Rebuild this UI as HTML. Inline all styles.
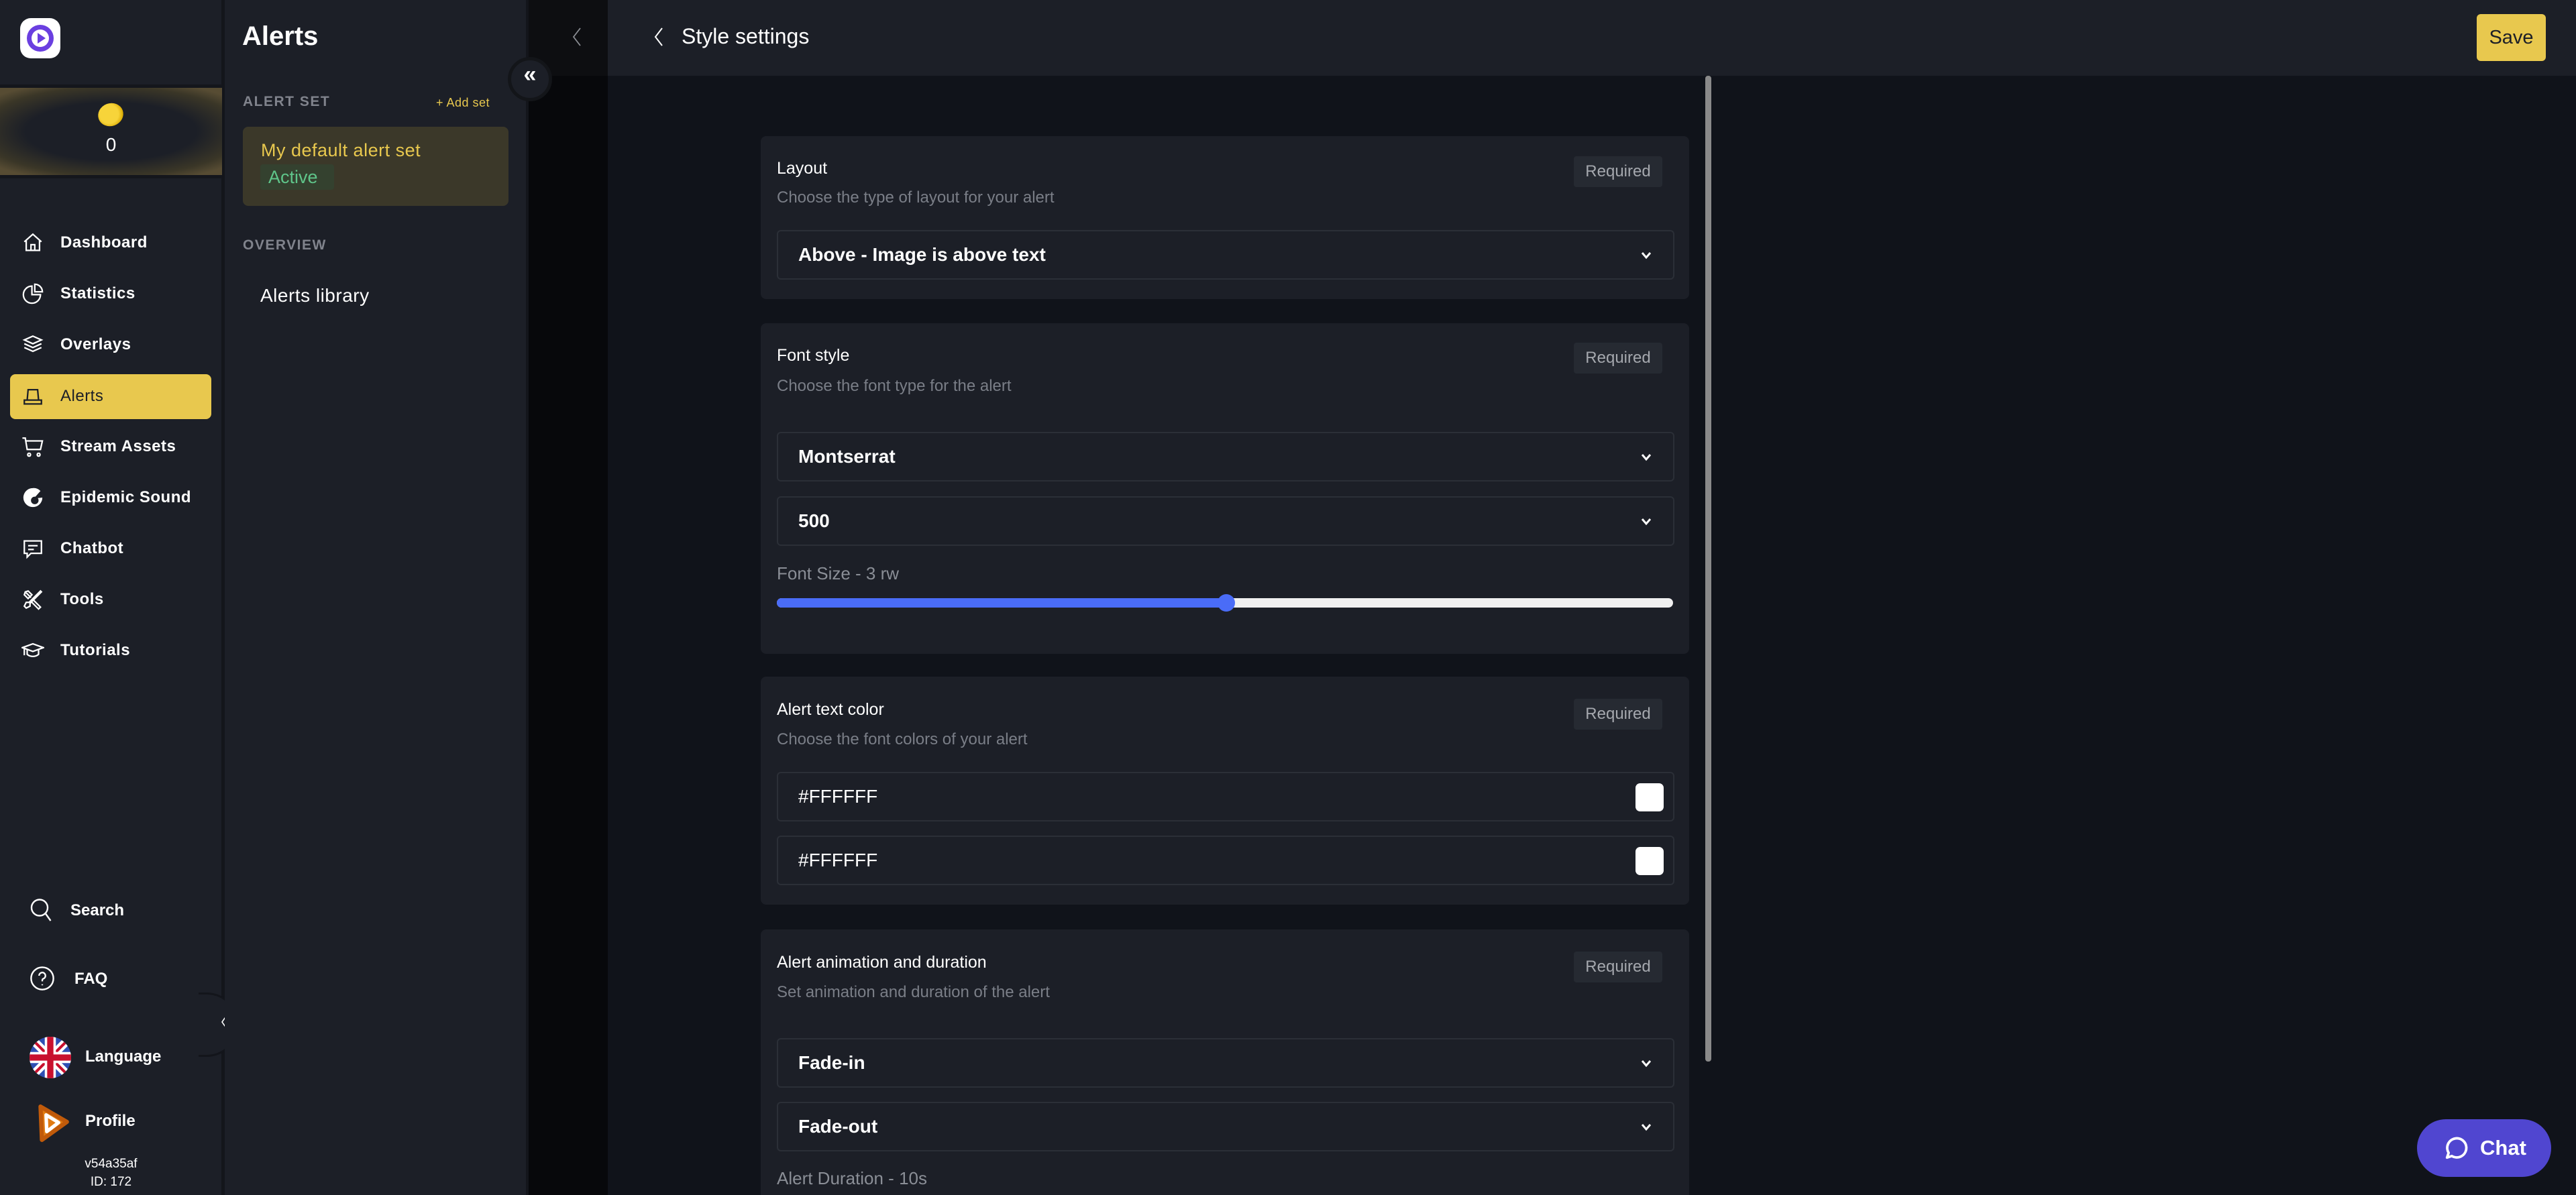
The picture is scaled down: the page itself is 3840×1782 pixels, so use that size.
<!DOCTYPE html>
<html><head><meta charset="utf-8"><style>
*{margin:0;padding:0;box-sizing:border-box}
html{width:3840px;height:1782px;overflow:hidden}
body{width:3840px;height:1782px;overflow:hidden;background:#10131a;font-family:"Liberation Sans",sans-serif;color:#fff;position:relative}
.a{position:absolute}
.nav{position:absolute;left:0;width:331px;height:60px;display:flex;align-items:center;font-size:24px;font-weight:600;letter-spacing:.5px}
.nav svg{position:absolute;left:32px;width:34px;height:34px}
.nav span{position:absolute;left:90px}
.card{position:absolute;left:1134px;width:1384px;background:#1c1f27;border-radius:8px}
.t{position:absolute;left:24px;font-size:25px;color:#fff}
.s{position:absolute;left:24px;font-size:24px;color:#7a7e87}
.req{position:absolute;left:1212px;width:132px;height:46px;background:#262a32;border-radius:4px;color:#a5a8ae;font-size:24px;display:flex;align-items:center;justify-content:center}
.sel{position:absolute;left:24px;width:1338px;height:74px;border:2px solid #2b2f37;border-radius:6px;font-size:28px;font-weight:600;display:flex;align-items:center;padding-left:30px}
.sel .ch{position:absolute;right:30px;top:26px;width:20px;height:20px}
.sw{position:absolute;right:14px;top:15px;width:42px;height:42px;background:#fff;border-radius:7px}
</style></head><body>
<!-- sidebar1 -->
<div class="a" style="left:0;top:0;width:331px;height:1782px;background:#1c1f27"></div>
<div class="a" style="left:330px;top:0;width:5px;height:1782px;background:#13151b"></div>
<div class="a" style="left:30px;top:27px;width:60px;height:60px;background:#fff;border-radius:16px"></div>
<svg class="a" style="left:36px;top:33px" width="48" height="48" viewBox="0 0 48 48"><circle cx="24" cy="24" r="20" fill="#6a3fe0"/><circle cx="24" cy="24" r="13" fill="#fff"/><path d="M20 16 L32 24 L20 32 Z" fill="#6a3fe0"/></svg>
<div class="a" style="left:0;top:126px;width:331px;height:140px;background:#14161c"></div>
<div class="a" style="left:0;top:131px;width:331px;height:130px;background:radial-gradient(ellipse 70% 60% at 50% 50%,#1c1f27 55%,#3a3627 85%,#574c33 100%)"></div>
<div class="a" style="left:146px;top:154px;width:38px;height:34px;border-radius:50%;background:radial-gradient(circle at 45% 45%,#f7d43a 50%,#d9a900 75%,#f2e27a 100%);transform:rotate(-20deg)"></div>
<div class="a" style="left:0;top:200px;width:331px;text-align:center;font-size:28px">0</div>

<div class="nav" style="top:332px"><svg viewBox="0 0 24 24" fill="none" stroke="#fff" stroke-width="1.6"><path d="M3 11 L12 3 L21 11 M5 9.5 V20 H19 V9.5 M10 20 V14 H14 V20"/></svg><span>Dashboard</span></div>
<div class="nav" style="top:408px"><svg viewBox="0 0 24 24" fill="none" stroke="#fff" stroke-width="1.6"><path d="M11 4 A9 9 0 1 0 20 13 H11 Z M14 2 V10 H22 A8 8 0 0 0 14 2 Z"/></svg><span>Statistics</span></div>
<div class="nav" style="top:484px"><svg viewBox="0 0 24 24" fill="none" stroke="#fff" stroke-width="1.6"><path d="M12 3 L21 7 L12 11 L3 7 Z M3 11 L12 15 L21 11 M3 15 L12 19 L21 15"/></svg><span>Overlays</span></div>
<div class="a" style="left:15px;top:558px;width:300px;height:67px;background:#e8c84e;border-radius:8px"></div>
<div class="nav" style="top:561px;color:#1c1f27"><svg viewBox="0 0 24 24" fill="none" stroke="#1c1f27" stroke-width="1.6"><path d="M7 5 H17 L18 16 H6 Z M3 16 H21 V20 H3 Z"/></svg><span style="font-weight:500">Alerts</span></div>
<div class="nav" style="top:636px"><svg viewBox="0 0 24 24" fill="none" stroke="#fff" stroke-width="1.6"><path d="M1 3 H4 L6 15 H20 L22 6 H5 M8 19 a1.5 1.5 0 1 0 .1 0 M18 19 a1.5 1.5 0 1 0 .1 0"/></svg><span>Stream Assets</span></div>
<div class="nav" style="top:712px"><svg viewBox="0 0 24 24"><path d="M12 2 A10 10 0 1 0 22 12 L13 13 L20 5 A10 10 0 0 0 12 2 Z" fill="#fff"/><circle cx="14" cy="15" r="4" fill="#1c1f27"/></svg><span>Epidemic Sound</span></div>
<div class="nav" style="top:788px"><svg viewBox="0 0 24 24" fill="none" stroke="#fff" stroke-width="1.6"><path d="M3 4 H21 V17 H10 L6 21 V17 H3 Z M7 9 H17 M7 13 H13"/></svg><span>Chatbot</span></div>
<div class="nav" style="top:864px"><svg viewBox="0 0 24 24" fill="none" stroke="#fff" stroke-width="1.6"><path d="M4 4 L10 10 M4 4 L3 7 L7 11 L11 7 L7 3 Z M13 13 L20 20 L18 22 L11 15 M20 3 L8 15 L5 15 L3 19 L5 21 L9 19 L9 16 L21 4 Z"/></svg><span>Tools</span></div>
<div class="nav" style="top:940px"><svg viewBox="0 0 24 24" fill="none" stroke="#fff" stroke-width="1.6"><path d="M1 9 L12 5 L23 9 L12 13 Z M6 11 V16 C9 19 15 19 18 16 V11 M3 10 V17"/></svg><span>Tutorials</span></div>

<svg class="a" style="left:44px;top:1338px" width="36" height="40" viewBox="0 0 24 26" fill="none" stroke="#fff" stroke-width="1.6"><circle cx="10" cy="10" r="8"/><path d="M16 16 L21 23"/></svg>
<div class="a" style="left:105px;top:1344px;font-size:24px;font-weight:600">Search</div>
<svg class="a" style="left:44px;top:1440px" width="38" height="38" viewBox="0 0 24 24" fill="none" stroke="#fff" stroke-width="1.5"><circle cx="12" cy="12" r="10.5"/><path d="M9 9.5 a3 3 0 1 1 4 2.8 c-1 .5-1 1-1 2.5 M12 17.5 v1"/></svg>
<div class="a" style="left:111px;top:1446px;font-size:24px;font-weight:600">FAQ</div>
<svg class="a" style="left:44px;top:1545px" width="62" height="64" viewBox="0 0 60 60"><defs><clipPath id="c"><circle cx="30" cy="30" r="30"/></clipPath></defs><g clip-path="url(#c)"><rect width="60" height="60" fill="#2e4fb4"/><path d="M0 0 L60 60 M60 0 L0 60" stroke="#fff" stroke-width="12"/><path d="M0 0 L60 60 M60 0 L0 60" stroke="#c8102e" stroke-width="4"/><path d="M30 0 V60 M0 30 H60" stroke="#fff" stroke-width="16"/><path d="M30 0 V60 M0 30 H60" stroke="#c8102e" stroke-width="9"/></g></svg>
<div class="a" style="left:127px;top:1562px;font-size:24px;font-weight:600">Language</div>
<svg class="a" style="left:52px;top:1646px" width="52" height="58" viewBox="0 0 50 56"><path d="M8 4 L46 26 L10 52 Z" fill="#e07b12" stroke="#c05a0a" stroke-width="6" stroke-linejoin="round"/><path d="M16 16 L34 27 L17 40 Z" fill="none" stroke="#fff" stroke-width="5" stroke-linejoin="round"/></svg>
<div class="a" style="left:127px;top:1658px;font-size:24px;font-weight:600">Profile</div>
<div class="a" style="left:0;top:1725px;width:331px;text-align:center;font-size:19px">v54a35af</div>
<div class="a" style="left:0;top:1752px;width:331px;text-align:center;font-size:19px">ID: 172</div>
<div class="a" style="left:296px;top:1480px;width:60px;height:96px;border-radius:0 48px 48px 0;background:#1c1f27;border:3px solid #13151b;border-left:none"></div>
<svg class="a" style="left:328px;top:1512px" width="12" height="24" viewBox="0 0 12 24" fill="none" stroke="#fff" stroke-width="1.6"><path d="M10 2 L3 12 L10 22"/></svg>

<!-- sidebar2 -->
<div class="a" style="left:335px;top:0;width:449px;height:1782px;background:#1c1f27"></div>
<div class="a" style="left:361px;top:32px;font-size:40px;font-weight:700">Alerts</div>
<div class="a" style="left:362px;top:140px;font-size:21px;color:#80838c;letter-spacing:1.5px;font-weight:600">ALERT SET</div>
<div class="a" style="left:650px;top:143px;font-size:18px;color:#e8c84e;letter-spacing:.5px">+ Add set</div>
<div class="a" style="left:362px;top:189px;width:396px;height:118px;background:#3b3829;border-radius:8px"></div>
<div class="a" style="left:389px;top:209px;font-size:27px;color:#e8c84e;font-weight:500;letter-spacing:.5px">My default alert set</div>
<div class="a" style="left:388px;top:245px;width:110px;height:38px;background:#34412f;border-radius:4px;color:#5fc58a;font-size:27px;padding-left:12px;line-height:38px">Active</div>
<div class="a" style="left:362px;top:354px;font-size:21px;color:#80838c;letter-spacing:1.5px;font-weight:600">OVERVIEW</div>
<div class="a" style="left:388px;top:425px;font-size:28px;letter-spacing:.5px">Alerts library</div>

<!-- strip -->
<div class="a" style="left:784px;top:0;width:122px;height:1782px;background:#07080b"></div>
<div class="a" style="left:784px;top:0;width:122px;height:113px;background:#0d0e11"></div>
<div class="a" style="left:784px;top:0;width:4px;height:1782px;background:#13151b"></div>
<svg class="a" style="left:852px;top:40px" width="16" height="30" viewBox="0 0 16 30" fill="none" stroke="#8a8d93" stroke-width="1.8"><path d="M13 2 L3 15 L13 28"/></svg>
<div class="a" style="left:757px;top:85px;width:66px;height:66px;border-radius:50%;background:#1c1f27;border:5px solid #131519"></div>
<div class="a" style="left:757px;top:92px;width:66px;text-align:center;font-size:34px;font-weight:700">«</div>

<!-- header -->
<div class="a" style="left:906px;top:0;width:2934px;height:113px;background:#1c1f27"></div>
<svg class="a" style="left:974px;top:40px" width="16" height="30" viewBox="0 0 16 30" fill="none" stroke="#fff" stroke-width="2"><path d="M13 2 L3 15 L13 28"/></svg>
<div class="a" style="left:1016px;top:36px;font-size:32px">Style settings</div>
<div class="a" style="left:3692px;top:21px;width:103px;height:70px;background:#e8c84e;border-radius:6px;color:#1c1f27;font-size:29px;display:flex;align-items:center;justify-content:center">Save</div>

<!-- scrollbar -->
<div class="a" style="left:2542px;top:113px;width:9px;height:1470px;background:#8a8a8a;border-radius:4px"></div>

<!-- cards -->
<div class="card" style="top:203px;height:243px">
<div class="t" style="top:34px">Layout</div><div class="s" style="top:78px">Choose the type of layout for your alert</div>
<div class="req" style="top:30px">Required</div>
<div class="sel" style="top:140px">Above - Image is above text<svg class="ch" viewBox="0 0 20 20" fill="none" stroke="#fff" stroke-width="3"><path d="M4 6 L10 13 L16 6"/></svg></div>
</div>
<div class="card" style="top:482px;height:493px">
<div class="t" style="top:34px">Font style</div><div class="s" style="top:80px">Choose the font type for the alert</div>
<div class="req" style="top:29px">Required</div>
<div class="sel" style="top:162px">Montserrat<svg class="ch" viewBox="0 0 20 20" fill="none" stroke="#fff" stroke-width="3"><path d="M4 6 L10 13 L16 6"/></svg></div>
<div class="sel" style="top:258px">500<svg class="ch" viewBox="0 0 20 20" fill="none" stroke="#fff" stroke-width="3"><path d="M4 6 L10 13 L16 6"/></svg></div>
<div class="s" style="top:358px;font-size:26px;color:#8a8e96">Font Size - 3 rw</div>
<div class="a" style="left:24px;top:410px;width:1336px;height:14px;background:#f0f0f0;border-radius:7px"></div>
<div class="a" style="left:24px;top:410px;width:670px;height:14px;background:#4a6cf7;border-radius:7px"></div>
<div class="a" style="left:681px;top:404px;width:26px;height:26px;background:#4a6cf7;border-radius:50%"></div>
</div>
<div class="card" style="top:1009px;height:340px">
<div class="t" style="top:35px">Alert text color</div><div class="s" style="top:80px">Choose the font colors of your alert</div>
<div class="req" style="top:33px">Required</div>
<div class="sel" style="top:142px;font-weight:400">#FFFFFF<div class="sw"></div></div>
<div class="sel" style="top:237px;font-weight:400">#FFFFFF<div class="sw"></div></div>
</div>
<div class="card" style="top:1386px;height:396px;border-radius:8px 8px 0 0">
<div class="t" style="top:35px">Alert animation and duration</div><div class="s" style="top:80px">Set animation and duration of the alert</div>
<div class="req" style="top:33px">Required</div>
<div class="sel" style="top:162px">Fade-in<svg class="ch" viewBox="0 0 20 20" fill="none" stroke="#fff" stroke-width="3"><path d="M4 6 L10 13 L16 6"/></svg></div>
<div class="sel" style="top:257px">Fade-out<svg class="ch" viewBox="0 0 20 20" fill="none" stroke="#fff" stroke-width="3"><path d="M4 6 L10 13 L16 6"/></svg></div>
<div class="s" style="top:356px;font-size:26px;color:#8a8e96">Alert Duration - 10s</div>
</div>

<!-- chat -->
<div class="a" style="left:3603px;top:1669px;width:200px;height:86px;background:#5046d0;border-radius:43px"></div>
<svg class="a" style="left:3643px;top:1693px" width="38" height="38" viewBox="0 0 24 24" fill="none" stroke="#fff" stroke-width="2.4" stroke-linejoin="round"><path d="M7.5 19.5 A9 9 0 1 0 4.5 16.5 L3 21 Z"/></svg>
<div class="a" style="left:3697px;top:1694px;font-size:31px;font-weight:700">Chat</div>
</body></html>
